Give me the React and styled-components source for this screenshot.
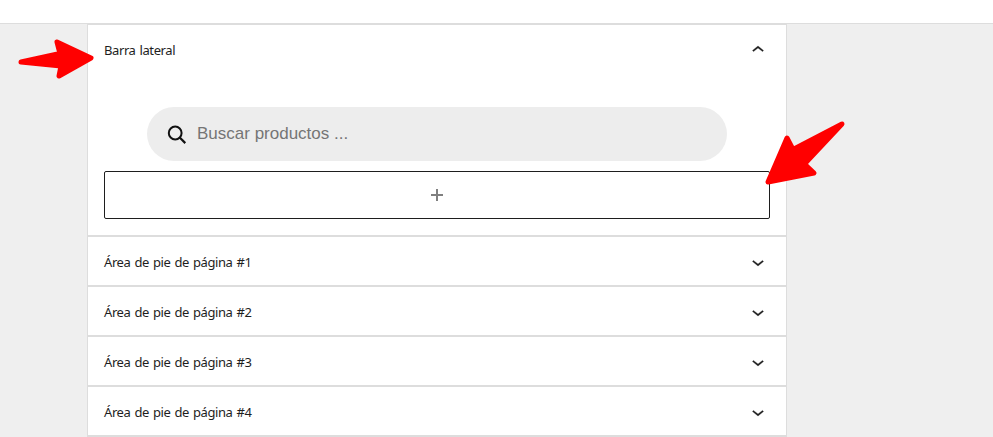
import React, { useState } from "react";
import styled, { createGlobalStyle } from "styled-components";

const GlobalStyle = createGlobalStyle`
  body {
    margin: 0;
    background: #efefef;
    overflow: hidden;
  }
  * {
    box-sizing: border-box;
  }
`;

const Screen = styled.div`
  position: relative;
  height: 437px;
  overflow: hidden;
  background: #efefef;
  font-family: "Noto Sans", "Open Sans", sans-serif;
  color: #1e1e1e;
`;

const TopBar = styled.div`
  height: 24px;
  background: white;
  border-bottom: 1px solid #dddddd;
`;

const Areas = styled.div`
  width: 700px;
  margin-left: 87px;
  border-bottom: 1px solid #dddddd;
`;

const Area = styled.div`
  background: white;
  border: 1px solid #dddddd;
`;

const Title = styled.button`
  display: flex;
  align-items: center;
  justify-content: space-between;
  width: 100%;
  height: 48px;
  padding: 2px 16px 0;
  border: 0;
  background: transparent;
  color: #1e1e1e;
  font-family: inherit;
  font-size: 13px;
  font-weight: 400;
  letter-spacing: -0.4px;
  word-spacing: 1px;
  text-align: left;
`;

const Body = styled.div`
  padding: 34px 16px 16px;
`;

const Search = styled.div`
  display: flex;
  align-items: center;
  width: 580px;
  height: 54px;
  margin: 0 auto 10px 43px;
  padding-left: 20px;
  border-radius: 27px;
  background: #ededed;
`;

const Input = styled.input`
  flex: 1;
  margin-left: 10px;
  padding: 0;
  border: 0;
  outline: 0;
  background: transparent;
  font-family: "Liberation Sans", Arial, sans-serif;
  font-size: 17px;
  &::placeholder {
    color: #757575;
    opacity: 1;
  }
`;

const Appender = styled.button`
  display: flex;
  align-items: center;
  justify-content: center;
  width: 666px;
  height: 48px;
  padding: 0;
  border: 1px solid #1e1e1e;
  border-radius: 2px;
  background: white;
`;

const Arrows = styled.svg`
  position: absolute;
  top: 0;
  left: 0;
  pointer-events: none;
  fill: #ff0000;
  stroke: #ff0000;
  stroke-width: 5;
  stroke-linejoin: round;
`;

const footers = [1, 2, 3, 4];

const Chevron = ({ open }) => (
  <svg
    width="24"
    height="24"
    viewBox="0 0 24 24"
    fill="#1e1e1e"
    stroke="#1e1e1e"
    strokeWidth="0.3"
  >
    {open ? (
      <path d="M6.5 12.4L12 8l5.5 4.4-.9 1.2L12 10l-4.5 3.6-1-1.2z" />
    ) : (
      <path d="M17.5 11.6L12 16l-5.5-4.4.9-1.2L12 14l4.5-3.6 1 1.2z" />
    )}
  </svg>
);

const SearchIcon = () => (
  <svg width="20" height="20" viewBox="0 0 20 20" fill="none" stroke="#111">
    <circle cx="8.2" cy="9" r="6.4" strokeWidth="2" />
    <path d="M12.7 13.5L18.3 19.1" strokeWidth="2.2" />
  </svg>
);

const WidgetArea = ({ title, defaultOpen, children }) => {
  const [open, setOpen] = useState(!!defaultOpen);

  return (
    <Area>
      <Title onClick={() => setOpen(!open)}>
        {title}
        <Chevron open={open} />
      </Title>
      {open && children}
    </Area>
  );
};

const App = () => (
  <Screen>
    <GlobalStyle />
    <TopBar />
    <Areas>
      <WidgetArea title="Barra lateral" defaultOpen>
        <Body>
          <Search>
            <SearchIcon />
            <Input placeholder="Buscar productos ..." />
          </Search>
          <Appender aria-label="Añadir bloque">
            <svg width="12" height="12" viewBox="0 0 12 12" fill="#808080">
              <path d="M5 0h2v5h5v2H7v5H5V7H0V5h5z" />
            </svg>
          </Appender>
        </Body>
      </WidgetArea>
      {footers.map(n => (
        <WidgetArea key={n} title={`Área de pie de página #${n}`} />
      ))}
    </Areas>
    <Arrows width="993" height="437">
      <path d="M21 62L60 53.5L57 42L91 58L59 76L61 66Z" />
      <path d="M768 182L787 138L793 149.5L842 124L804.5 164L814 173Z" />
    </Arrows>
  </Screen>
);

export default App;
